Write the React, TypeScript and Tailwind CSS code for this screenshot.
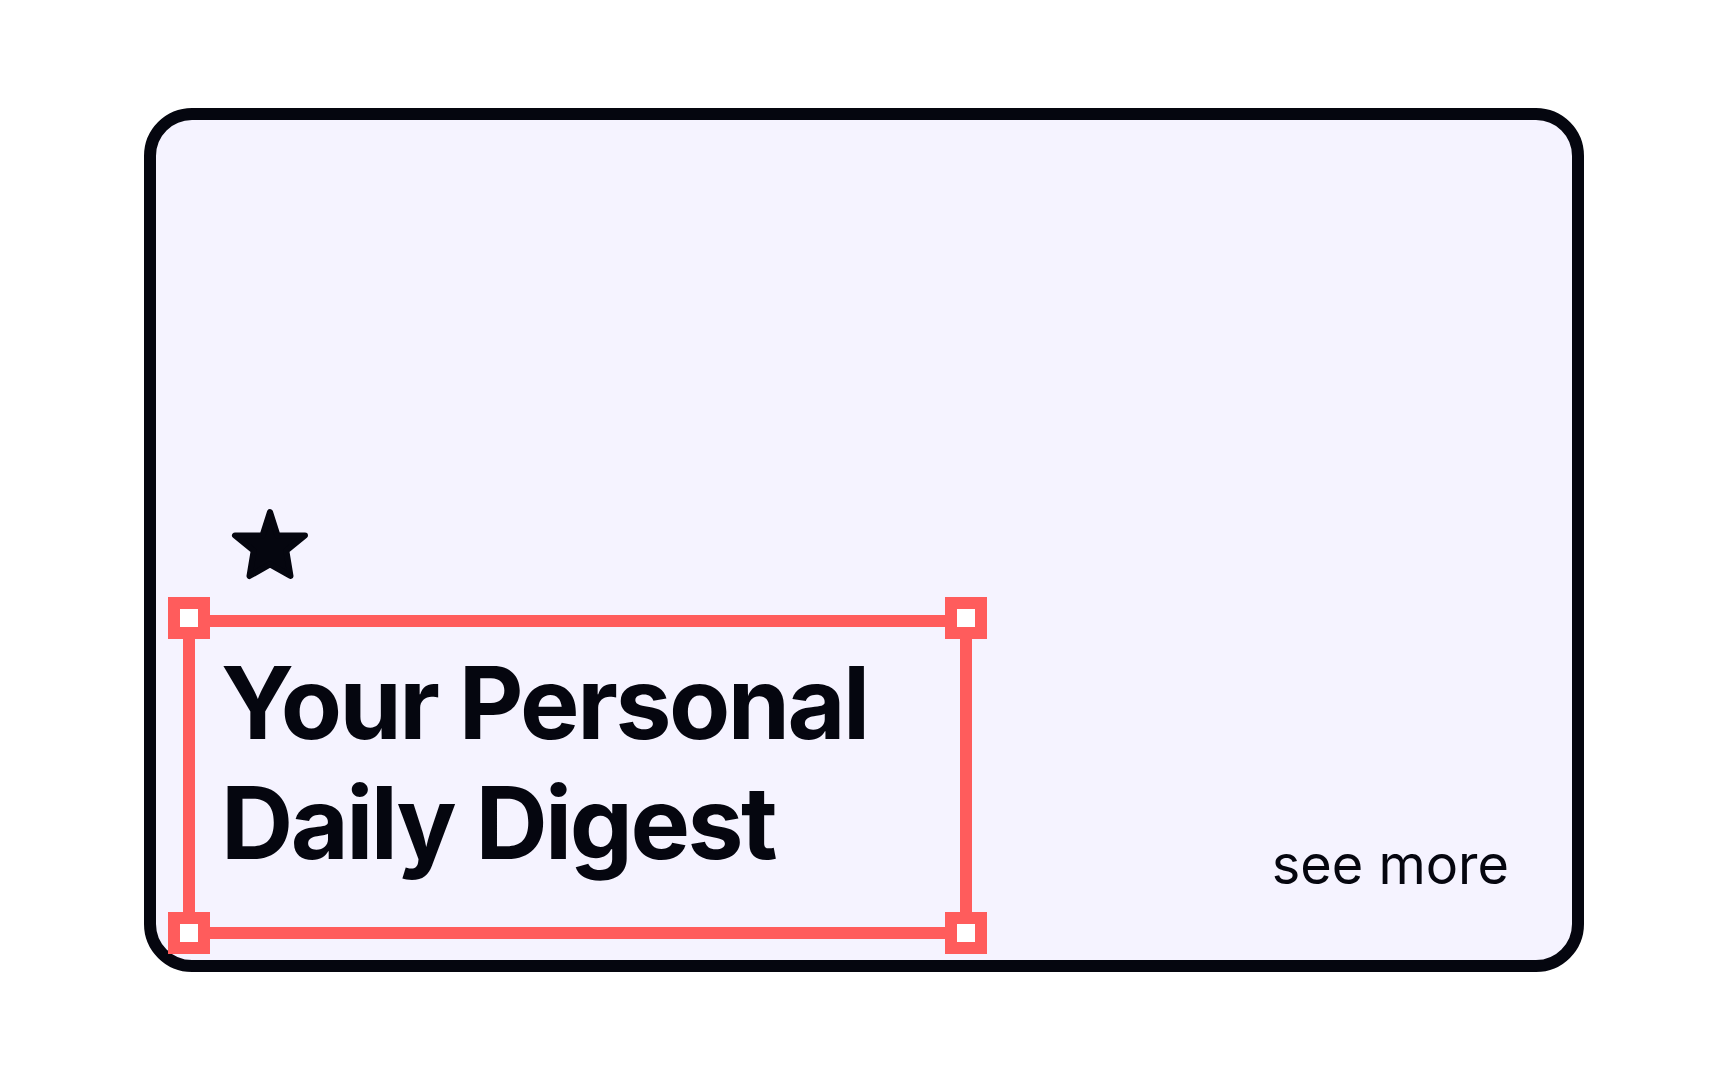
import React from "react";

function Handle({ className }: { className: string }) {
  return (
    <div
      className={`absolute w-[42px] h-[42px] border-[12px] border-[#ff5c5c] bg-white ${className}`}
    />
  );
}

export default function App() {
  return (
    <div
      className="w-full h-[1080px] bg-white flex items-center justify-center"
      style={{ fontFamily: "Inter, 'Noto Sans', sans-serif" }}
    >
      <div className="w-[1440px] h-[864px] rounded-[48px] border-[12px] border-[#05060f] bg-[#f5f3ff] flex items-end justify-between pl-[27px] pr-[63px] pb-[21px]">
        <div className="flex flex-col">
          <svg
            viewBox="0 0 80 75"
            className="w-[80px] h-[75px] ml-[47px] mb-[33px]"
          >
            <path
              d="M40 5 L47.5 28.5 L75 28.5 L56.3 43.8 L60.5 69 L40 57.3 L19.5 69 L23.7 43.8 L5 28.5 L32.5 28.5 Z"
              fill="#05060f"
              stroke="#05060f"
              strokeWidth="6"
              strokeLinejoin="round"
            />
          </svg>
          <div className="relative w-[789px] h-[324px] border-[12px] border-[#ff5c5c] pt-[16px] pl-[26px]">
            <Handle className="-left-[27px] -top-[30px]" />
            <Handle className="-right-[27px] -top-[30px]" />
            <Handle className="-left-[27px] -bottom-[27px]" />
            <Handle className="-right-[27px] -bottom-[27px]" />
            <h1 className="text-[100px] leading-[120px] font-bold tracking-tight text-[#05060f]">
              Your Personal
              <br />
              Daily Digest
            </h1>
          </div>
        </div>
        <span className="text-[54px] leading-[54px] text-[#05060f] mb-[47px]">
          see more
        </span>
      </div>
    </div>
  );
}
